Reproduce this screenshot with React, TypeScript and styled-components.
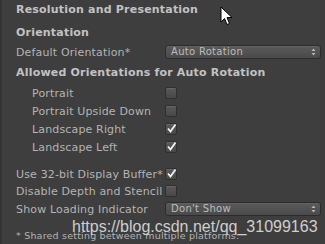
import React from "react";
import styled, { createGlobalStyle } from "styled-components";

const Global = createGlobalStyle`
  html, body { margin: 0; padding: 0; background: #3e3e3e; }
  body { width: 325px; height: 244px; overflow: hidden; }
`;

const Panel = styled.div`
  position: relative;
  width: 325px;
  height: 244px;
  box-sizing: border-box;
  border-left: 2px solid #343434;
  background: #3e3e3e;
  padding-left: 14px;
  display: flex;
  flex-direction: column;
  font-family: "DejaVu Sans", "Liberation Sans", sans-serif;
  font-size: 11px;
  letter-spacing: 0.15px;
  color: #b4b4b4;
  overflow: hidden;
`;

const Row = styled.div<{ $indent?: boolean; $mt?: number }>`
  display: flex;
  align-items: center;
  height: 18px;
  margin-top: ${(p) => p.$mt ?? 0}px;
  padding-left: ${(p) => (p.$indent ? 16 : 0)}px;
`;

const Header = styled(Row)`
  font-weight: bold;
  color: #c2c2c2;
  letter-spacing: 0.2px;
  padding-top: 1px;
  box-sizing: border-box;
`;

const Label = styled.span<{ $indent?: boolean }>`
  flex: 0 0 ${(p) => (p.$indent ? 133 : 149)}px;
  width: ${(p) => (p.$indent ? 133 : 149)}px;
  padding-top: 1px;
  white-space: nowrap;
  overflow: visible;
`;

const Box = styled.span`
  position: relative;
  width: 12px;
  height: 12px;
  box-sizing: border-box;
  border-radius: 2px;
  border: 1px solid #2f2f2f;
  background: linear-gradient(#595959, #484848);
  box-shadow: inset 0 1px 0 rgba(255, 255, 255, 0.08);
  display: flex;
  align-items: center;
  justify-content: center;
`;

const Popup = styled.span`
  width: 156px;
  height: 14px;
  box-sizing: border-box;
  border-radius: 3px;
  border: 1px solid #2c2c2c;
  background: linear-gradient(#5a5a5a, #4a4a4a);
  box-shadow: inset 0 1px 0 rgba(255, 255, 255, 0.06);
  display: flex;
  align-items: center;
  padding: 0 4px 0 5px;
  font-size: 10px;
  letter-spacing: 0.3px;
  color: #bcbcbc;
`;

const PopupText = styled.span`
  flex: 1;
  line-height: 12px;
`;

const Footnote = styled(Row)`
  font-size: 9.5px;
  letter-spacing: 0.2px;
`;

const Watermark = styled.div`
  position: absolute;
  left: 70px;
  top: 218px;
  font-family: "Liberation Sans", Arial, sans-serif;
  font-size: 16px;
  letter-spacing: 0;
  color: rgba(228, 228, 228, 0.88);
  white-space: nowrap;
`;

const Cursor = styled.svg`
  position: absolute;
  left: 218px;
  top: 6px;
`;

const Check = ({ on }: { on?: boolean }) => (
  <Box>
    {on && (
      <svg width="11" height="11" viewBox="0 0 11 11" style={{ position: "absolute", left: 0, top: -1 }}>
        <path d="M2 5.5 L4.5 8.5 L9.5 1.5" fill="none" stroke="#f2f2f2" strokeWidth="1.8" />
      </svg>
    )}
  </Box>
);

const Arrows = () => (
  <svg width="5" height="8" viewBox="0 0 5 8">
    <path d="M2.5 0.5 L4.5 3 L0.5 3 Z" fill="#b8b8b8" />
    <path d="M2.5 7.5 L4.5 5 L0.5 5 Z" fill="#b8b8b8" />
  </svg>
);

const Dropdown = ({ text }: { text: string }) => (
  <Popup>
    <PopupText>{text}</PopupText>
    <Arrows />
  </Popup>
);

export default function App() {
  return (
    <>
      <Global />
      <Panel>
        <Header>Resolution and Presentation</Header>
        <Header $mt={5}>Orientation</Header>
        <Row $mt={2}>
          <Label>Default Orientation*</Label>
          <Dropdown text="Auto Rotation" />
        </Row>
        <Header $mt={3}>Allowed Orientations for Auto Rotation</Header>
        <Row $indent $mt={3}>
          <Label $indent>Portrait</Label>
          <Check />
        </Row>
        <Row $indent>
          <Label $indent>Portrait Upside Down</Label>
          <Check />
        </Row>
        <Row $indent>
          <Label $indent>Landscape Right</Label>
          <Check on />
        </Row>
        <Row $indent>
          <Label $indent>Landscape Left</Label>
          <Check on />
        </Row>
        <Row $mt={9}>
          <Label>Use 32-bit Display Buffer*</Label>
          <Check on />
        </Row>
        <Row>
          <Label>Disable Depth and Stencil</Label>
          <Check />
        </Row>
        <Row>
          <Label>Show Loading Indicator</Label>
          <Dropdown text="Don't Show" />
        </Row>
        <Footnote $mt={8}>* Shared setting between multiple platforms.</Footnote>
        <Watermark>https://blog.csdn.net/qq_31099163</Watermark>
        <Cursor width="13" height="21" viewBox="0 0 13 21">
          <path d="M1 1 L1 16 L4.5 12.5 L7 18.5 L9.5 17.5 L7 11.5 L12 11.5 Z" fill="#fff" stroke="#000" strokeWidth="1" strokeLinejoin="miter" />
        </Cursor>
      </Panel>
    </>
  );
}
